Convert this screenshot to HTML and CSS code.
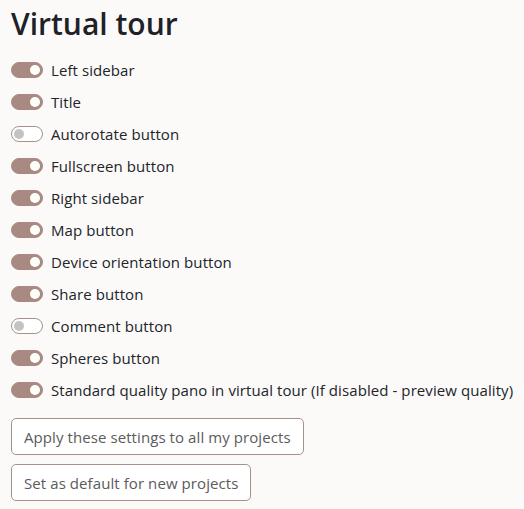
FILE: index.html
```html
<!DOCTYPE html>
<html>
<head>
<meta charset="utf-8">
<link rel="stylesheet" href="styles.css">
</head>
<body>
<div class="page">
  <h1 class="title">Virtual tour</h1>
  <div class="list">
    <label class="row"><span class="switch on"></span><span class="lbl">Left sidebar</span></label>
    <label class="row"><span class="switch on"></span><span class="lbl">Title</span></label>
    <label class="row"><span class="switch"></span><span class="lbl">Autorotate button</span></label>
    <label class="row"><span class="switch on"></span><span class="lbl">Fullscreen button</span></label>
    <label class="row"><span class="switch on"></span><span class="lbl">Right sidebar</span></label>
    <label class="row"><span class="switch on"></span><span class="lbl">Map button</span></label>
    <label class="row"><span class="switch on"></span><span class="lbl">Device orientation button</span></label>
    <label class="row"><span class="switch on"></span><span class="lbl">Share button</span></label>
    <label class="row"><span class="switch"></span><span class="lbl">Comment button</span></label>
    <label class="row"><span class="switch on"></span><span class="lbl">Spheres button</span></label>
    <label class="row"><span class="switch on"></span><span class="lbl">Standard quality pano in virtual tour (If disabled - preview quality)</span></label>
  </div>
  <div class="actions">
    <button class="btn">Apply these settings to all my projects</button>
    <button class="btn">Set as default for new projects</button>
  </div>
</div>
</body>
</html>
```
FILE: styles.css
```css
html, body {
  margin: 0;
  padding: 0;
  background: #fcfaf9;
}
body {
  font-family: "Open Sans", "Noto Sans", sans-serif;
  color: #212529;
}
.page {
  padding: 4px 0 0 11px;
}
.title {
  margin: 0;
  font-size: 30px;
  font-weight: 600;
  line-height: 40px;
  color: #1e2227;
}
.list {
  display: flex;
  flex-direction: column;
  margin-top: 10px;
}
.row {
  display: flex;
  align-items: center;
  height: 32px;
  gap: 8px;
  font-size: 15px;
  letter-spacing: 0.08px;
  white-space: nowrap;
}
.switch {
  position: relative;
  box-sizing: border-box;
  width: 32px;
  height: 16px;
  border-radius: 8px;
  border: 1px solid #a8918b;
  background: #fff;
  flex: none;
}
.switch::after {
  content: "";
  position: absolute;
  left: 2px;
  top: 2px;
  width: 10px;
  height: 10px;
  border-radius: 50%;
  background: #c3c3c3;
}
.switch.on {
  background: #a88a82;
  border-color: #a88a82;
}
.switch.on::after {
  left: auto;
  right: 2px;
  background: #fff;
}
.actions {
  display: flex;
  flex-direction: column;
  align-items: flex-start;
  gap: 9px;
  margin-top: 12px;
}
.btn {
  font-family: inherit;
  font-size: 15px;
  letter-spacing: 0.08px;
  color: #5b5b5b;
  background: #fff;
  border: 1px solid #a8918b;
  border-radius: 5px;
  height: 37px;
  padding: 0 12px;
  white-space: nowrap;
}
```
